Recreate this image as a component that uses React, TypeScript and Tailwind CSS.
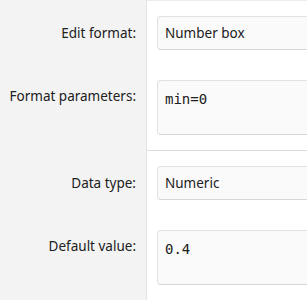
import React from "react";

const sans = { fontFamily: '"Noto Sans", "Open Sans", sans-serif' };

function Label({ text, tall }: { text: string; tall?: boolean }) {
  return (
    <div
      className={
        tall
          ? "h-[55px] pt-[6px] pr-[10px] text-right text-[13.5px] leading-[20px] text-[#202020]"
          : "h-[34px] flex items-center justify-end pr-[10px] text-[13.5px] leading-[20px] text-[#202020]"
      }
    >
      {text}
    </div>
  );
}

function Row({
  label,
  value,
  tall,
  mono,
  topLine,
}: {
  label: string;
  value: string;
  tall?: boolean;
  mono?: boolean;
  topLine?: boolean;
}) {
  return (
    <div className="flex">
      <div className={"w-[147px] shrink-0 bg-[#f3f3f3] border-r border-[#e3e3e3] " + (topLine ? "pt-[16px] pb-[15px]" : "pt-[15px] pb-[15px]")}>
        <Label text={label} tall={tall} />
      </div>
      <div className={"flex-1 overflow-hidden pl-[10px] bg-white " + (topLine ? "pt-[15px] pb-[15px] border-t border-[#ececec]" : "pt-[15px] pb-[15px]")}>
        <div
          className={
            "w-[220px] rounded-[4px] border border-[#e2e2e2] border-b-[#d6d6d6] bg-[#fafafa] px-[7px] text-[#202020] " +
            (tall ? "h-[55px] pt-[5px]" : "h-[34px] flex items-center")
          }
        >
          <span
            className={mono ? "text-[14px] leading-[20px]" : "text-[13.5px] leading-[20px]"}
            style={mono ? { fontFamily: '"DejaVu Sans Mono", monospace' } : undefined}
          >
            {value}
          </span>
        </div>
      </div>
    </div>
  );
}

export default function App() {
  return (
    <div className="w-[307px] h-[300px] overflow-hidden bg-white" style={sans}>
      <Row label="Edit format:" value="Number box" topLine />
      <Row label="Format parameters:" value="min=0" tall mono />
      <div className="flex h-px">
        <div className="w-[147px] shrink-0 bg-[#f3f3f3] border-r border-[#e3e3e3]" />
        <div className="flex-1 bg-[#dcdcdc]" />
      </div>
      <Row label="Data type:" value="Numeric" />
      <Row label="Default value:" value="0.4" tall mono />
    </div>
  );
}
